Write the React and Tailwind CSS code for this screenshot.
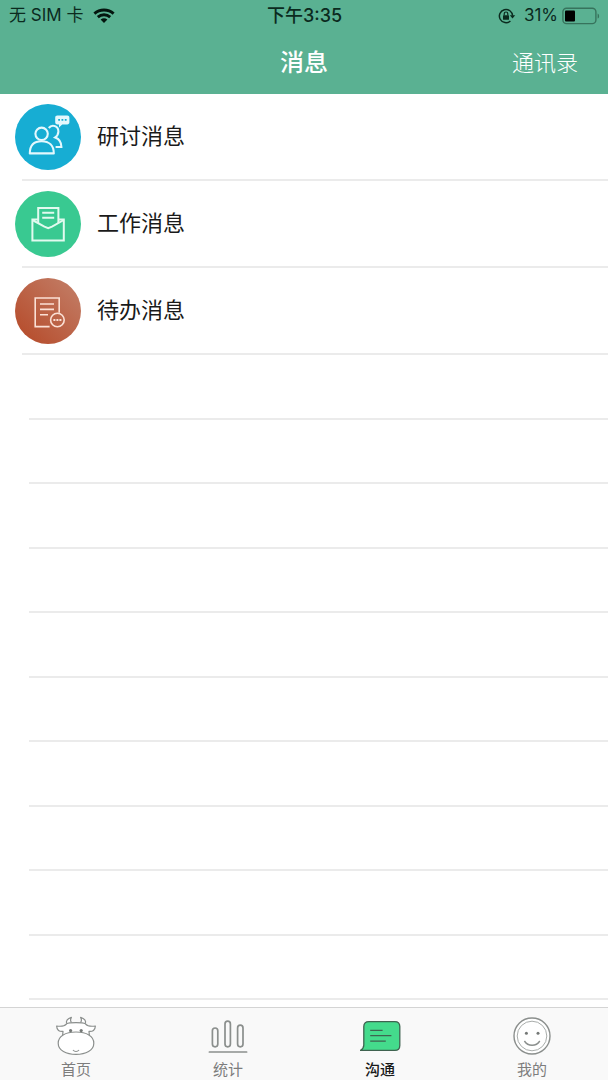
import React, { useState } from "react";

const SANS = "font-['Inter','Noto_Sans_CJK_SC',sans-serif]";

const messages = [
  { id: "discuss", label: "研讨消息", Icon: DiscussIcon },
  { id: "work", label: "工作消息", Icon: WorkIcon },
  { id: "todo", label: "待办消息", Icon: TodoIcon },
];

const tabs = [
  { id: "home", label: "首页", Icon: CowIcon },
  { id: "stats", label: "统计", Icon: StatsIcon },
  { id: "chat", label: "沟通", Icon: ChatIcon },
  { id: "mine", label: "我的", Icon: SmileIcon },
];

function WifiIcon() {
  return (
    <svg className="w-[22px] h-4" viewBox="0 0 22 16" fill="none" stroke="#04150e" strokeWidth="2.9">
      <path d="M1.4 5.6C6.8.7 15.2.7 20.6 5.6" />
      <path d="M4.8 9.2c3.6-3.2 8.8-3.2 12.4 0" />
      <path d="M7.6 11.6c2-1.7 4.8-1.7 6.8 0L11 15z" fill="#04150e" stroke="none" />
    </svg>
  );
}

function RotationLockIcon() {
  return (
    <svg className="w-[18px] h-4" viewBox="0 0 18 16" fill="none" stroke="#0b2a1e" strokeWidth="1.5">
      <path d="M12.4 13a6.6 6.6 0 1 1 2.2-5.2" />
      <path d="M11.8 7.2h5.4l-2.7 3.4z" fill="#0b2a1e" stroke="none" />
      <rect x="5" y="7.2" width="6" height="4.6" rx=".6" fill="#0b2a1e" stroke="none" />
      <path d="M6.2 7.5V5.8a1.8 1.8 0 0 1 3.6 0v1.7" strokeWidth="1.2" />
    </svg>
  );
}

function BatteryIcon() {
  return (
    <svg className="w-[38px] h-[18px]" viewBox="0 0 38 18" fill="none">
      <rect x=".9" y="1.2" width="33" height="15.4" rx="3.6" stroke="#37735c" strokeWidth="1.4" />
      <rect x="3" y="3.4" width="10" height="11" rx="1" fill="#000" />
      <path d="M35.6 6.4c2 .8 2 4.4 0 5.2z" fill="#37735c" />
    </svg>
  );
}

function DiscussIcon() {
  return (
    <svg className="w-[66px] h-[66px]" viewBox="0 0 66 66" fill="none" stroke="#e4f8fd" strokeWidth="2.1">
      <circle cx="33" cy="33" r="33" fill="#17add3" stroke="none" />
      <circle cx="26.6" cy="29.8" r="6.2" />
      <path d="M14.8 49.4c0-8 4.4-12.2 11.8-12.2s12.2 4.2 12.2 12.2z" strokeLinejoin="round" />
      <path d="M33.8 24c1.200-1.600 2.800-2.400 4.600-2.200 3.400.2 5.200 2.800 5 6-.2 2.600-1.400 4.400-3.200 5.600 3.800 1.400 6.200 4.800 6.200 9.600h-5.800" />
      <path
        d="M42.4 11.6h9.800c1.400 0 2.200.8 2.200 2.200v4.400c0 1.400-.8 2.200-2.200 2.200h-5L44 23.600v-3.200h-1.600c-1.400 0-2.200-.8-2.200-2.200v-4.400c0-1.400.8-2.200 2.200-2.200z"
        fill="#e4f8fd"
        stroke="none"
      />
      <path d="M43.2 15.8h1.800m1.500 0h1.800m1.500 0h1.800" stroke="#17add3" strokeWidth="1.8" />
    </svg>
  );
}

function WorkIcon() {
  return (
    <svg className="w-[66px] h-[66px]" viewBox="0 0 66 66" fill="none" stroke="#e2faef" strokeWidth="2">
      <circle cx="33" cy="33" r="33" fill="#39c991" stroke="none" />
      <path d="M23 28.4h-5.6v21h31.4v-21h-5.6" />
      <path d="M17.4 29l12 6.6 3.8 1.6 3.8-1.6 11.8-6.6" />
      <path d="M23.2 32V17h20.2v15" />
      <path d="M27.2 21.8h12M27.2 26.8h12" />
    </svg>
  );
}

function TodoIcon() {
  return (
    <svg className="w-[66px] h-[66px]" viewBox="0 0 66 66" fill="none" stroke="#fbe0d5" strokeWidth="1.6">
      <defs>
        <linearGradient id="todo-bg" x1="0" y1="1" x2="1" y2="0">
          <stop offset="0.15" stopColor="#b75030" />
          <stop offset="0.85" stopColor="#c17860" />
        </linearGradient>
      </defs>
      <circle cx="33" cy="33" r="33" fill="url(#todo-bg)" stroke="none" />
      <path d="M34.6 48.6H20.200V20h24v14.800" />
      <path d="M25 26h14M25 31.400h14M25 36.800h8" />
      <circle cx="42.4" cy="42" r="6.8" />
      <path d="M38.400 42h2m1 0h2m1 0h2" strokeWidth="2" />
    </svg>
  );
}

function CowIcon() {
  return (
    <svg className="w-10 h-10" viewBox="0 0 40 40" fill="#fff" stroke="#8b8f8d" strokeWidth="1.2" strokeLinejoin="round">
      <path d="M10.600 7.600C9.800 5 11.400 2.600 15.400 1.400c-1.200 2.200-1.200 3.800.2 5.200M29.400 7.600c.8-2.600-.8-5-4.800-6.200 1.200 2.200 1.200 3.800-.2 5.200" />
      <path d="M10.600 7.800c2.600-1.600 16.200-1.600 18.800 0 2 2.400 6 2.800 10 2.200-.2 4.200-2.800 5.800-6.400 5.400l.6 7H6.400l.6-7C3.400 15.800.8 14.200.6 10c4 .6 8 .2 10-2.200z" />
      <path d="M20 16c10.600 0 17.800 4 17.800 11.200S29.800 38.400 20 38.400 2.200 34.400 2.200 27.200 9.400 16 20 16z" />
      <path d="M17 34c1.600 2 4.400 2 6 0" fill="none" />
      <circle cx="14.6" cy="14.600" r="1.600" fill="#747876" stroke="none" />
      <circle cx="25.2" cy="14.600" r="1.600" fill="#747876" stroke="none" />
    </svg>
  );
}

function StatsIcon() {
  return (
    <svg className="w-10 h-10" viewBox="0 0 40 40" fill="none" stroke="#8b8f8d" strokeWidth="1.7">
      <rect x="4.4" y="12" width="5.4" height="18.8" rx="2.7" />
      <rect x="17" y="5.2" width="5.4" height="25.6" rx="2.7" />
      <rect x="29.6" y="9.2" width="5.4" height="21.6" rx="2.7" />
      <path d="M1.400 36h37.200" strokeLinecap="round" />
    </svg>
  );
}

function ChatIcon() {
  return (
    <svg className="w-[42px] h-10" viewBox="0 0 42 40" fill="none" stroke="#3f6350" strokeWidth="1.3">
      <path
        d="M10 5.600h25.800c3.200 0 5 1.800 5 5v18.800c0 3.200-1.800 5-5 5H1.600c2-1.400 3.200-3 3.200-5.400V10.600c0-3.200 2-5 5.200-5z"
        fill="#44db8c"
        strokeLinejoin="round"
      />
      <path d="M11.200 14.400h12.400M11.200 19.600h21.200M11.200 25.200h15.600" />
    </svg>
  );
}

function SmileIcon() {
  return (
    <svg className="w-10 h-10" viewBox="0 0 40 40" fill="none" stroke="#8b8f8d">
      <circle cx="20" cy="20" r="18" fill="#fff" strokeWidth="1.4" />
      <circle cx="20" cy="20" r="14.8" stroke="#a9adab" strokeWidth="1" />
      <circle cx="14.4" cy="17.2" r="1.5" fill="#747876" stroke="none" />
      <circle cx="26" cy="17.2" r="1.5" fill="#747876" stroke="none" />
      <path d="M12.400 25c3.600 5.600 11.800 5.600 15.400 0" strokeWidth="1.4" />
    </svg>
  );
}

function StatusBar() {
  return (
    <div className="h-8 pl-[9px] pr-2 grid grid-cols-[1fr_auto_1fr] items-center text-[17px] text-[#0b2a1e]">
      <div className="flex items-center gap-2.5">
        <span>无 SIM 卡</span>
        <WifiIcon />
      </div>
      <span className="text-lg font-medium">下午3:35</span>
      <div className="flex items-center justify-end">
        <RotationLockIcon />
        <span className="ml-2 mr-1">31%</span>
        <BatteryIcon />
      </div>
    </div>
  );
}

export default function MessagesPage() {
  const [active, setActive] = useState("chat");

  return (
    <div className={`h-screen flex flex-col bg-white ${SANS}`}>
      <header className="shrink-0 bg-[#5ab192]">
        <StatusBar />
        <div className="h-[62px] px-[30px] grid grid-cols-[1fr_auto_1fr] items-center text-white">
          <h1 className="col-start-2 text-2xl font-medium">消息</h1>
          <button className="justify-self-end text-[22px] font-light cursor-pointer">通讯录</button>
        </div>
      </header>

      <main className="flex-1 min-h-0 flex flex-col overflow-hidden pb-[7px]">
        <ul>
          {messages.map(({ id, label, Icon }) => (
            <li key={id}>
              <button className="w-full h-[85px] pl-[15px] flex items-center gap-4 text-left cursor-pointer">
                <Icon />
                <span className="text-[22px] text-[#1a1a1a]">{label}</span>
              </button>
              <div className="ml-[22px] h-0.5 bg-[#ebebeb]" />
            </li>
          ))}
        </ul>
        {/* 空白行 */}
        <div className="flex-1 flex flex-col">
          {Array.from({ length: 10 }).map((_, idx) => (
            <div key={idx} className="flex-1 ml-[29px] border-b-2 border-[#ebebeb]" />
          ))}
        </div>
      </main>

      <nav className="shrink-0 h-[73px] grid grid-cols-4 bg-[#f9f9f9] border-t border-[#d4d4d4]">
        {tabs.map(({ id, label, Icon }) => (
          <button
            key={id}
            onClick={() => setActive(id)}
            className="pt-2 flex flex-col items-center gap-1 cursor-pointer"
          >
            <Icon />
            <span
              className={`text-[15px] leading-5 ${
                active === id ? "text-[#1a1a1a] font-medium" : "text-[#7d7d7d]"
              }`}
            >
              {label}
            </span>
          </button>
        ))}
      </nav>
    </div>
  );
}
